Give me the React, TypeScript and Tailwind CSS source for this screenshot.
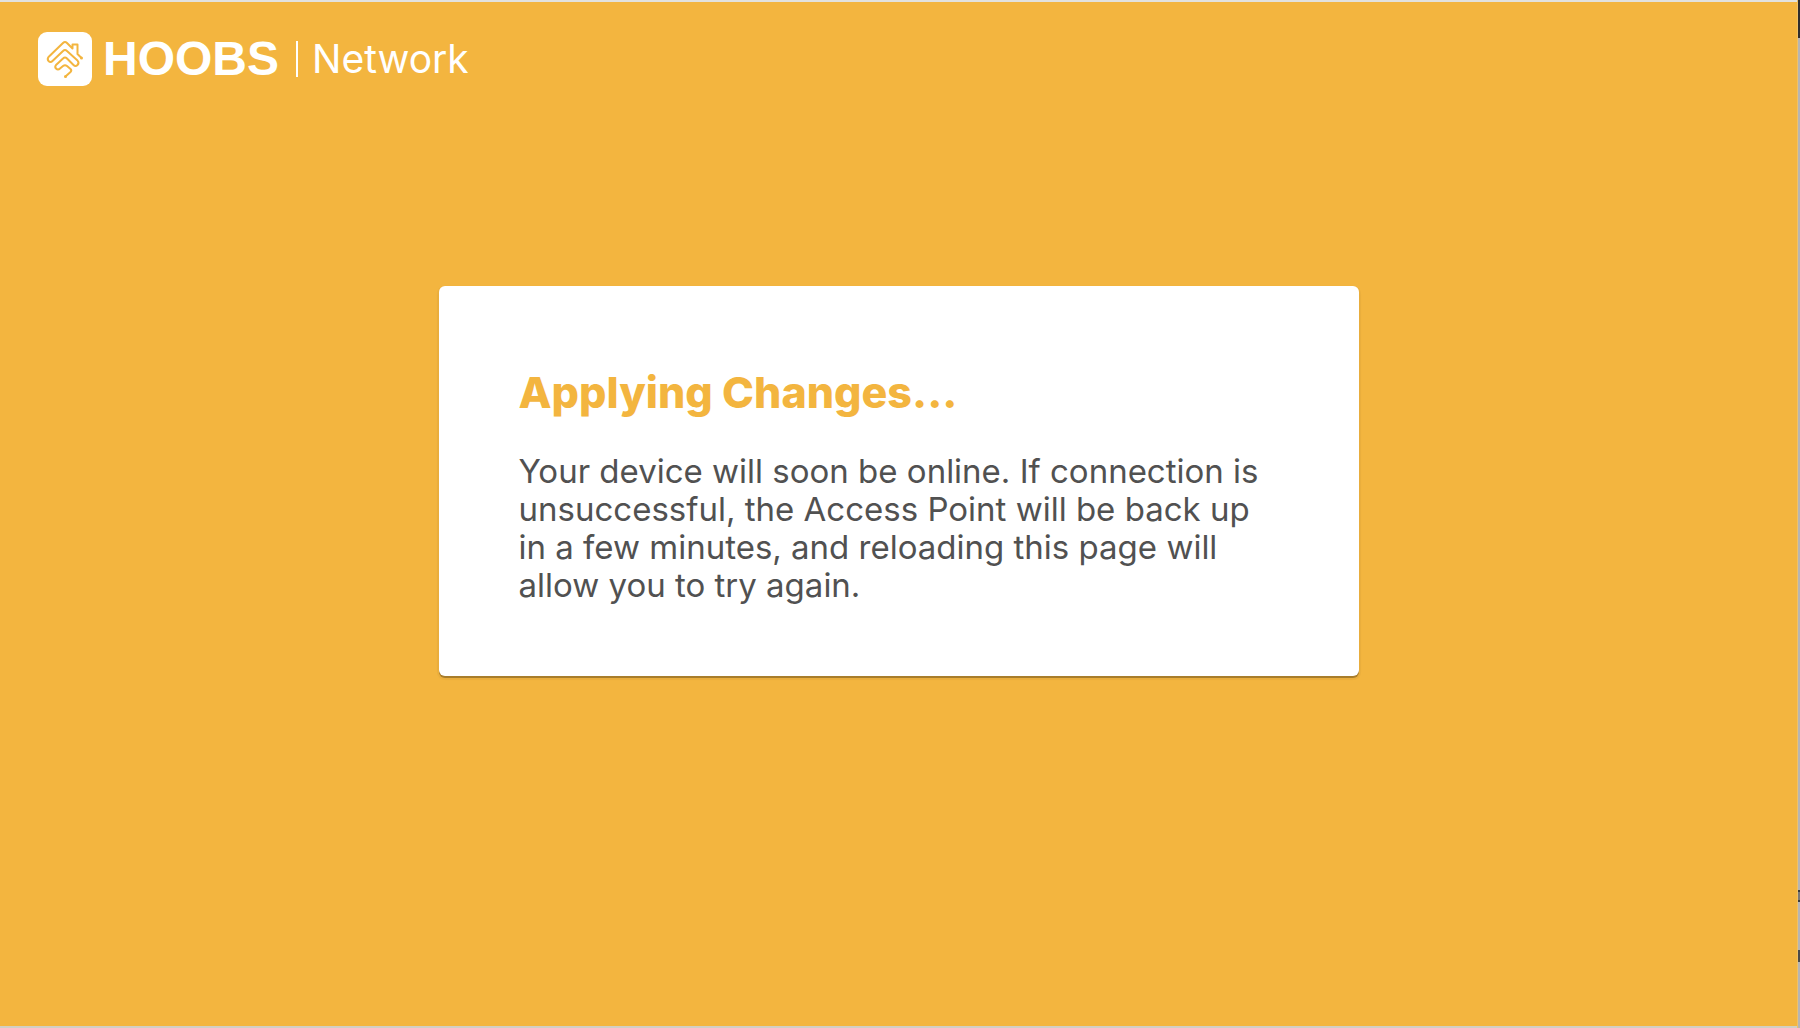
function HouseMark() {
  return (
    <svg
      viewBox="0 0 54 54"
      className="size-[54px] shrink-0"
      fill="none"
      stroke="#f3b53f"
      strokeWidth="2"
      strokeLinecap="round"
      strokeLinejoin="round"
      aria-hidden="true"
    >
      <rect width="54" height="54" rx="9" fill="#fff" stroke="none" />
      <path d="M43 25.500L39.500 22V12.500H34.500V16.500L29 11Q27 9 25 11L10.500 25Q9 27 10.500 29Q12.500 31 14.500 29L25 19Q27 17 29 19L39.500 28.500Q41.500 31 39.500 33Q37.500 35 35.500 33L29 26.500Q27 24.500 25 26.500L18 33Q16.500 35 18 36.500Q20 38.500 22 36.500L25 34Q27 32.500 29 34L32.500 37Q34 38.500 32.500 40L27.500 44.500" />
      <circle cx="43.500" cy="26" r="1.500" fill="#f3b53f" stroke="none" />
      <circle cx="27.500" cy="44.500" r="1.500" fill="#f3b53f" stroke="none" />
    </svg>
  );
}

export default function App() {
  return (
    <div className="flex min-h-screen bg-[#f3b53f] font-['Inter',sans-serif]">
      <div className="flex flex-1 flex-col border-t-2 border-b-2 border-t-[#e2e2de] border-b-[#d2cfc4]">
        <header className="flex items-center px-[38px] pt-[30px] text-white">
          <HouseMark />
          <span className="ml-[11px] font-['Liberation_Sans',sans-serif] text-5xl leading-[54px] font-bold">HOOBS</span>
          <span className="ml-[17px] h-9 w-0.5 bg-white" />
          <span className="ml-3.5 text-[39px] leading-[52px]">Network</span>
        </header>
        <main className="mx-auto mt-[200px] w-full max-w-[920px] rounded-md bg-white px-20 pt-20 pb-[72px] shadow-[0_2px_0_0_rgba(0,0,0,0.28),0_2px_1px_2px_rgba(0,0,0,0.04)]">
          <h1 className="text-[43px] leading-[52px] font-extrabold text-[#f3b53f]">Applying Changes...</h1>
          <p className="mt-[34px] text-[33px] leading-[38px] text-[#515151]">
            Your device will soon be online. If connection is unsuccessful, the Access Point will be back up in a few
            minutes, and reloading this page will allow you to try again.
          </p>
        </main>
      </div>
      {/* Sliver of the window behind the page */}
      <div className="flex w-[3px] flex-col border-l border-[#f0c266] bg-[#b5b5b5]" aria-hidden="true">
        <span className="h-[38px] bg-[#2d2d2d]" />
        <span className="mt-auto h-3 border-y-2 border-[#3a3a3a] bg-[#777]" />
        <span className="mt-12 mb-[66px] h-3 bg-[#4a4a4a]" />
      </div>
    </div>
  );
}
